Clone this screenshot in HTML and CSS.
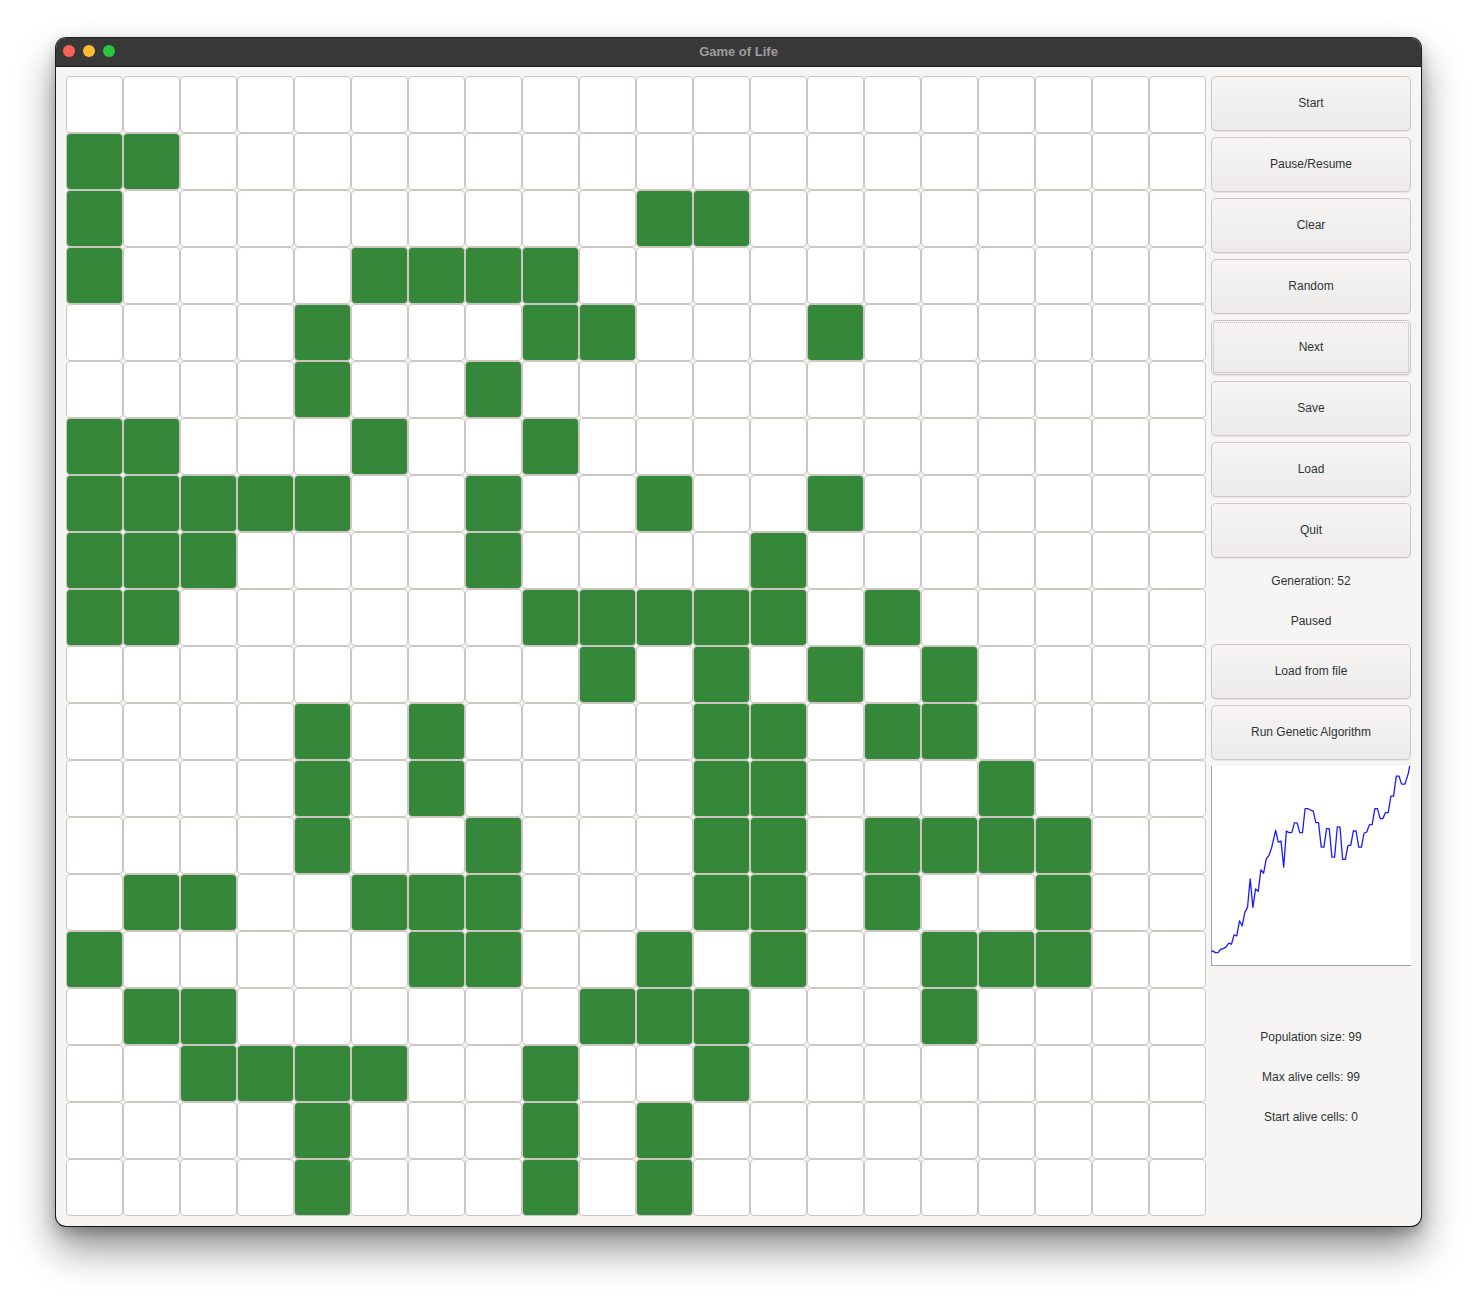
FILE: index.html
```html
<!DOCTYPE html>
<html>
<head>
<meta charset="utf-8">
<title>Game of Life</title>
<link rel="stylesheet" href="styles.css">
</head>
<body>
<div class="desk">
  <div class="window">
    <div class="titlebar">
      <div class="lights">
        <span class="light red"></span>
        <span class="light yellow"></span>
        <span class="light green"></span>
      </div>
      <div class="title">Game of Life</div>
    </div>
    <div class="content">
      <div class="board">
        <div class="c"></div><div class="c"></div><div class="c"></div><div class="c"></div><div class="c"></div><div class="c"></div><div class="c"></div><div class="c"></div><div class="c"></div><div class="c"></div><div class="c"></div><div class="c"></div><div class="c"></div><div class="c"></div><div class="c"></div><div class="c"></div><div class="c"></div><div class="c"></div><div class="c"></div><div class="c"></div>
        <div class="c on"></div><div class="c on"></div><div class="c"></div><div class="c"></div><div class="c"></div><div class="c"></div><div class="c"></div><div class="c"></div><div class="c"></div><div class="c"></div><div class="c"></div><div class="c"></div><div class="c"></div><div class="c"></div><div class="c"></div><div class="c"></div><div class="c"></div><div class="c"></div><div class="c"></div><div class="c"></div>
        <div class="c on"></div><div class="c"></div><div class="c"></div><div class="c"></div><div class="c"></div><div class="c"></div><div class="c"></div><div class="c"></div><div class="c"></div><div class="c"></div><div class="c on"></div><div class="c on"></div><div class="c"></div><div class="c"></div><div class="c"></div><div class="c"></div><div class="c"></div><div class="c"></div><div class="c"></div><div class="c"></div>
        <div class="c on"></div><div class="c"></div><div class="c"></div><div class="c"></div><div class="c"></div><div class="c on"></div><div class="c on"></div><div class="c on"></div><div class="c on"></div><div class="c"></div><div class="c"></div><div class="c"></div><div class="c"></div><div class="c"></div><div class="c"></div><div class="c"></div><div class="c"></div><div class="c"></div><div class="c"></div><div class="c"></div>
        <div class="c"></div><div class="c"></div><div class="c"></div><div class="c"></div><div class="c on"></div><div class="c"></div><div class="c"></div><div class="c"></div><div class="c on"></div><div class="c on"></div><div class="c"></div><div class="c"></div><div class="c"></div><div class="c on"></div><div class="c"></div><div class="c"></div><div class="c"></div><div class="c"></div><div class="c"></div><div class="c"></div>
        <div class="c"></div><div class="c"></div><div class="c"></div><div class="c"></div><div class="c on"></div><div class="c"></div><div class="c"></div><div class="c on"></div><div class="c"></div><div class="c"></div><div class="c"></div><div class="c"></div><div class="c"></div><div class="c"></div><div class="c"></div><div class="c"></div><div class="c"></div><div class="c"></div><div class="c"></div><div class="c"></div>
        <div class="c on"></div><div class="c on"></div><div class="c"></div><div class="c"></div><div class="c"></div><div class="c on"></div><div class="c"></div><div class="c"></div><div class="c on"></div><div class="c"></div><div class="c"></div><div class="c"></div><div class="c"></div><div class="c"></div><div class="c"></div><div class="c"></div><div class="c"></div><div class="c"></div><div class="c"></div><div class="c"></div>
        <div class="c on"></div><div class="c on"></div><div class="c on"></div><div class="c on"></div><div class="c on"></div><div class="c"></div><div class="c"></div><div class="c on"></div><div class="c"></div><div class="c"></div><div class="c on"></div><div class="c"></div><div class="c"></div><div class="c on"></div><div class="c"></div><div class="c"></div><div class="c"></div><div class="c"></div><div class="c"></div><div class="c"></div>
        <div class="c on"></div><div class="c on"></div><div class="c on"></div><div class="c"></div><div class="c"></div><div class="c"></div><div class="c"></div><div class="c on"></div><div class="c"></div><div class="c"></div><div class="c"></div><div class="c"></div><div class="c on"></div><div class="c"></div><div class="c"></div><div class="c"></div><div class="c"></div><div class="c"></div><div class="c"></div><div class="c"></div>
        <div class="c on"></div><div class="c on"></div><div class="c"></div><div class="c"></div><div class="c"></div><div class="c"></div><div class="c"></div><div class="c"></div><div class="c on"></div><div class="c on"></div><div class="c on"></div><div class="c on"></div><div class="c on"></div><div class="c"></div><div class="c on"></div><div class="c"></div><div class="c"></div><div class="c"></div><div class="c"></div><div class="c"></div>
        <div class="c"></div><div class="c"></div><div class="c"></div><div class="c"></div><div class="c"></div><div class="c"></div><div class="c"></div><div class="c"></div><div class="c"></div><div class="c on"></div><div class="c"></div><div class="c on"></div><div class="c"></div><div class="c on"></div><div class="c"></div><div class="c on"></div><div class="c"></div><div class="c"></div><div class="c"></div><div class="c"></div>
        <div class="c"></div><div class="c"></div><div class="c"></div><div class="c"></div><div class="c on"></div><div class="c"></div><div class="c on"></div><div class="c"></div><div class="c"></div><div class="c"></div><div class="c"></div><div class="c on"></div><div class="c on"></div><div class="c"></div><div class="c on"></div><div class="c on"></div><div class="c"></div><div class="c"></div><div class="c"></div><div class="c"></div>
        <div class="c"></div><div class="c"></div><div class="c"></div><div class="c"></div><div class="c on"></div><div class="c"></div><div class="c on"></div><div class="c"></div><div class="c"></div><div class="c"></div><div class="c"></div><div class="c on"></div><div class="c on"></div><div class="c"></div><div class="c"></div><div class="c"></div><div class="c on"></div><div class="c"></div><div class="c"></div><div class="c"></div>
        <div class="c"></div><div class="c"></div><div class="c"></div><div class="c"></div><div class="c on"></div><div class="c"></div><div class="c"></div><div class="c on"></div><div class="c"></div><div class="c"></div><div class="c"></div><div class="c on"></div><div class="c on"></div><div class="c"></div><div class="c on"></div><div class="c on"></div><div class="c on"></div><div class="c on"></div><div class="c"></div><div class="c"></div>
        <div class="c"></div><div class="c on"></div><div class="c on"></div><div class="c"></div><div class="c"></div><div class="c on"></div><div class="c on"></div><div class="c on"></div><div class="c"></div><div class="c"></div><div class="c"></div><div class="c on"></div><div class="c on"></div><div class="c"></div><div class="c on"></div><div class="c"></div><div class="c"></div><div class="c on"></div><div class="c"></div><div class="c"></div>
        <div class="c on"></div><div class="c"></div><div class="c"></div><div class="c"></div><div class="c"></div><div class="c"></div><div class="c on"></div><div class="c on"></div><div class="c"></div><div class="c"></div><div class="c on"></div><div class="c"></div><div class="c on"></div><div class="c"></div><div class="c"></div><div class="c on"></div><div class="c on"></div><div class="c on"></div><div class="c"></div><div class="c"></div>
        <div class="c"></div><div class="c on"></div><div class="c on"></div><div class="c"></div><div class="c"></div><div class="c"></div><div class="c"></div><div class="c"></div><div class="c"></div><div class="c on"></div><div class="c on"></div><div class="c on"></div><div class="c"></div><div class="c"></div><div class="c"></div><div class="c on"></div><div class="c"></div><div class="c"></div><div class="c"></div><div class="c"></div>
        <div class="c"></div><div class="c"></div><div class="c on"></div><div class="c on"></div><div class="c on"></div><div class="c on"></div><div class="c"></div><div class="c"></div><div class="c on"></div><div class="c"></div><div class="c"></div><div class="c on"></div><div class="c"></div><div class="c"></div><div class="c"></div><div class="c"></div><div class="c"></div><div class="c"></div><div class="c"></div><div class="c"></div>
        <div class="c"></div><div class="c"></div><div class="c"></div><div class="c"></div><div class="c on"></div><div class="c"></div><div class="c"></div><div class="c"></div><div class="c on"></div><div class="c"></div><div class="c on"></div><div class="c"></div><div class="c"></div><div class="c"></div><div class="c"></div><div class="c"></div><div class="c"></div><div class="c"></div><div class="c"></div><div class="c"></div>
        <div class="c"></div><div class="c"></div><div class="c"></div><div class="c"></div><div class="c on"></div><div class="c"></div><div class="c"></div><div class="c"></div><div class="c on"></div><div class="c"></div><div class="c on"></div><div class="c"></div><div class="c"></div><div class="c"></div><div class="c"></div><div class="c"></div><div class="c"></div><div class="c"></div><div class="c"></div><div class="c"></div>
      </div>
      <div class="panel">
        <div class="btn">Start</div>
        <div class="btn">Pause/Resume</div>
        <div class="btn">Clear</div>
        <div class="btn">Random</div>
        <div class="btn focus">Next</div>
        <div class="btn">Save</div>
        <div class="btn">Load</div>
        <div class="btn">Quit</div>
        <div class="label">Generation: 52</div>
        <div class="label">Paused</div>
        <div class="btn">Load from file</div>
        <div class="btn">Run Genetic Algorithm</div>
        <div class="chart">
          <svg class="plot" viewBox="35 18 597 597" width="200" height="200" preserveAspectRatio="none">
            <polyline class="line" points="35,573 40,570 48,575 56,575 64,565 72,563 80,558 88,547 96,550 104,522 112,525 120,480 128,495 136,455 144,440 152,355 160,440 168,385 176,392 184,328 192,338 200,295 208,285 216,262 228,210 236,245 244,242 252,320 260,212 268,217 276,217 284,188 292,188 300,217 308,217 316,145 324,145 332,150 340,152 348,187 356,187 364,260 372,260 380,205 388,205 396,290 404,290 412,200 420,200 428,297 436,297 444,255 452,255 460,212 468,212 476,260 484,260 492,218 500,215 508,193 516,193 524,145 532,145 540,175 548,175 556,157 564,157 572,108 580,108 588,48 596,48 604,72 614,72 624,40 628,18"/>
            <line class="axis" x1="35.5" y1="18" x2="35.5" y2="615"/>
            <line class="axis" x1="35" y1="614.5" x2="632" y2="614.5"/>
          </svg>
        </div>
        <div class="spacer"></div>
        <div class="label">Population size: 99</div>
        <div class="label">Max alive cells: 99</div>
        <div class="label">Start alive cells: 0</div>
      </div>
    </div>
  </div>
</div>
</body>
</html>
```

FILE: styles.css
```css
html, body {
  margin: 0;
  padding: 0;
  background: #ffffff;
}

.desk {
  padding: 38px 0 0 56px;
  height: 1300px;
  box-sizing: border-box;
}

.window {
  width: 1365px;
  height: 1188px;
  border-radius: 10px;
  overflow: hidden;
  background: #f6f5f4;
  box-shadow: 0 0 0 1px rgba(0, 0, 0, 0.85), 0 22px 40px rgba(0, 0, 0, 0.45), 0 6px 14px rgba(0, 0, 0, 0.25);
  display: flex;
  flex-direction: column;
}

.titlebar {
  height: 28px;
  flex: 0 0 28px;
  background: #383838;
  border-bottom: 1px solid #1c1c1c;
  position: relative;
  display: flex;
  align-items: center;
  justify-content: center;
}

.lights {
  position: absolute;
  left: 7px;
  top: 7px;
  display: flex;
  gap: 8px;
}

.light {
  width: 12px;
  height: 12px;
  border-radius: 50%;
  display: block;
}

.light.red { background: #fe5f57; }
.light.yellow { background: #febc2e; }
.light.green { background: #28c840; }

.title {
  font-family: "Liberation Sans", Arial, sans-serif;
  font-weight: bold;
  font-size: 13px;
  color: #9d9d9d;
  padding-bottom: 1px;
}

.content {
  flex: 1;
  display: flex;
  padding: 9px 10px 10px 10px;
  gap: 5px;
}

.board {
  display: grid;
  grid-template-columns: repeat(20, 57px);
  grid-template-rows: repeat(20, 57px);
  width: 1140px;
  height: 1140px;
}

.c {
  box-sizing: border-box;
  border: 1px solid #cbc6c1;
  border-radius: 4px;
  background: #ffffff;
}

.c.on {
  background: #35873a;
}

.panel {
  width: 200px;
  display: flex;
  flex-direction: column;
  gap: 6px;
  font-family: "Liberation Sans", Arial, sans-serif;
  font-size: 12px;
  color: #2e3436;
}

.btn {
  height: 55px;
  box-sizing: border-box;
  border: 1px solid #cdc7c2;
  border-radius: 5px;
  background: linear-gradient(#f6f5f4, #edebe9);
  box-shadow: 0 1px 1px rgba(0, 0, 0, 0.07);
  display: flex;
  align-items: center;
  justify-content: center;
  padding-bottom: 2px;
  flex: 0 0 55px;
}

.btn.focus {
  outline: 1px dotted rgba(46, 52, 54, 0.3);
  outline-offset: -3px;
}

.label {
  height: 34px;
  flex: 0 0 34px;
  display: flex;
  align-items: center;
  justify-content: center;
}

.chart {
  width: 200px;
  height: 200px;
  flex: 0 0 200px;
  background: #ffffff;
}

.plot {
  display: block;
}

.line {
  fill: none;
  stroke: #1a1aff;
  stroke-width: 1.3px;
  vector-effect: non-scaling-stroke;
  stroke-linejoin: round;
}

.axis {
  stroke: #6e6e86;
  stroke-width: 1px;
  vector-effect: non-scaling-stroke;
}

.spacer {
  height: 42px;
  flex: 0 0 42px;
}
```
